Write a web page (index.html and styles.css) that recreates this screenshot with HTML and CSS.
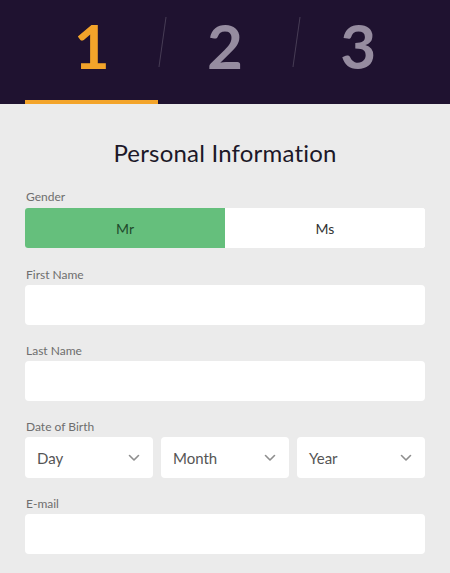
FILE: index.html
```html
<!DOCTYPE html>
<html lang="en">
<head>
<meta charset="utf-8">
<title>Personal Information</title>
<link rel="stylesheet" href="styles.css">
</head>
<body>
<header class="steps">
  <div class="step active"><span class="num">1</span></div>
  <div class="step"><span class="sep"></span><span class="num">2</span></div>
  <div class="step"><span class="sep"></span><span class="num">3</span></div>
</header>
<main class="form">
  <h1 class="title">Personal Information</h1>
  <div class="group group-gender">
    <label class="label">Gender</label>
    <div class="toggle">
      <button class="opt selected">Mr</button>
      <button class="opt">Ms</button>
    </div>
  </div>
  <div class="group">
    <label class="label">First Name</label>
    <div class="input"></div>
  </div>
  <div class="group">
    <label class="label">Last Name</label>
    <div class="input"></div>
  </div>
  <div class="group">
    <label class="label">Date of Birth</label>
    <div class="selects">
      <div class="select"><span>Day</span><svg class="chev" viewBox="0 0 12 8" width="12" height="8"><path d="M1.5 1.5 L6 6 L10.5 1.5" fill="none" stroke="#8e8e8e" stroke-width="1.6" stroke-linecap="round" stroke-linejoin="round"/></svg></div>
      <div class="select"><span>Month</span><svg class="chev" viewBox="0 0 12 8" width="12" height="8"><path d="M1.5 1.5 L6 6 L10.5 1.5" fill="none" stroke="#8e8e8e" stroke-width="1.6" stroke-linecap="round" stroke-linejoin="round"/></svg></div>
      <div class="select"><span>Year</span><svg class="chev" viewBox="0 0 12 8" width="12" height="8"><path d="M1.5 1.5 L6 6 L10.5 1.5" fill="none" stroke="#8e8e8e" stroke-width="1.6" stroke-linecap="round" stroke-linejoin="round"/></svg></div>
    </div>
  </div>
  <div class="group">
    <label class="label">E-mail</label>
    <div class="input"></div>
  </div>
</main>
</body>
</html>
```
FILE: styles.css
```css
* { box-sizing: border-box; }
html, body { margin: 0; padding: 0; }
body {
  background: #ebebeb;
  font-family: "Lato", "Noto Sans", sans-serif;
  width: 450px;
  height: 573px;
  overflow: hidden;
}
.steps {
  background: #1f1230;
  height: 104px;
  display: flex;
  padding: 0 25px;
}
.step {
  flex: 1;
  position: relative;
  display: flex;
  justify-content: center;
  align-items: flex-start;
}
.step .num {
  font-family: "Lato", sans-serif;
  font-weight: 700;
  font-size: 62px;
  line-height: 1;
  margin-top: 14px;
  color: #968ca0;
}
.step.active .num { color: #f3a42a; }
.step.active {
  border-bottom: 4px solid #f3a42a;
}
.step .sep {
  position: absolute;
  left: 4px;
  top: 17px;
  width: 1px;
  height: 50px;
  background: rgba(255,255,255,0.18);
  transform: skewX(-8deg);
}
.form {
  padding: 34px 25px 0 25px;
}
.title {
  margin: 0 0 21px 0;
  text-align: center;
  font-weight: 400;
  font-size: 24px;
  line-height: 30px;
  color: #1c1828;
  letter-spacing: 0.2px;
}
.group {
  display: flex;
  flex-direction: column;
  margin-bottom: 18px;
}
.group-gender { margin-bottom: 19px; }
.group-gender .label { margin-bottom: 4px; }
.label {
  font-size: 12px;
  line-height: 15px;
  color: #6e6e6e;
  margin-bottom: 3px;
  padding-left: 1px;
}
.toggle {
  display: flex;
  height: 40px;
  border-radius: 3px;
  overflow: hidden;
  background: #fff;
}
.opt {
  flex: 1;
  border: 0;
  background: #fff;
  font-family: inherit;
  font-size: 14px;
  color: #333;
  padding: 0;
}
.opt.selected {
  background: #65bf7c;
  color: #1f4a2c;
}
.input {
  height: 40px;
  background: #fff;
  border-radius: 4px;
}
.selects {
  display: flex;
  gap: 8px;
}
.select {
  flex: 1;
  height: 41px;
  background: #fff;
  border-radius: 4px;
  display: flex;
  align-items: center;
  justify-content: space-between;
  padding: 0 13px 0 12px;
  font-size: 15px;
  color: #555;
}
.chev { display: block; }
```
